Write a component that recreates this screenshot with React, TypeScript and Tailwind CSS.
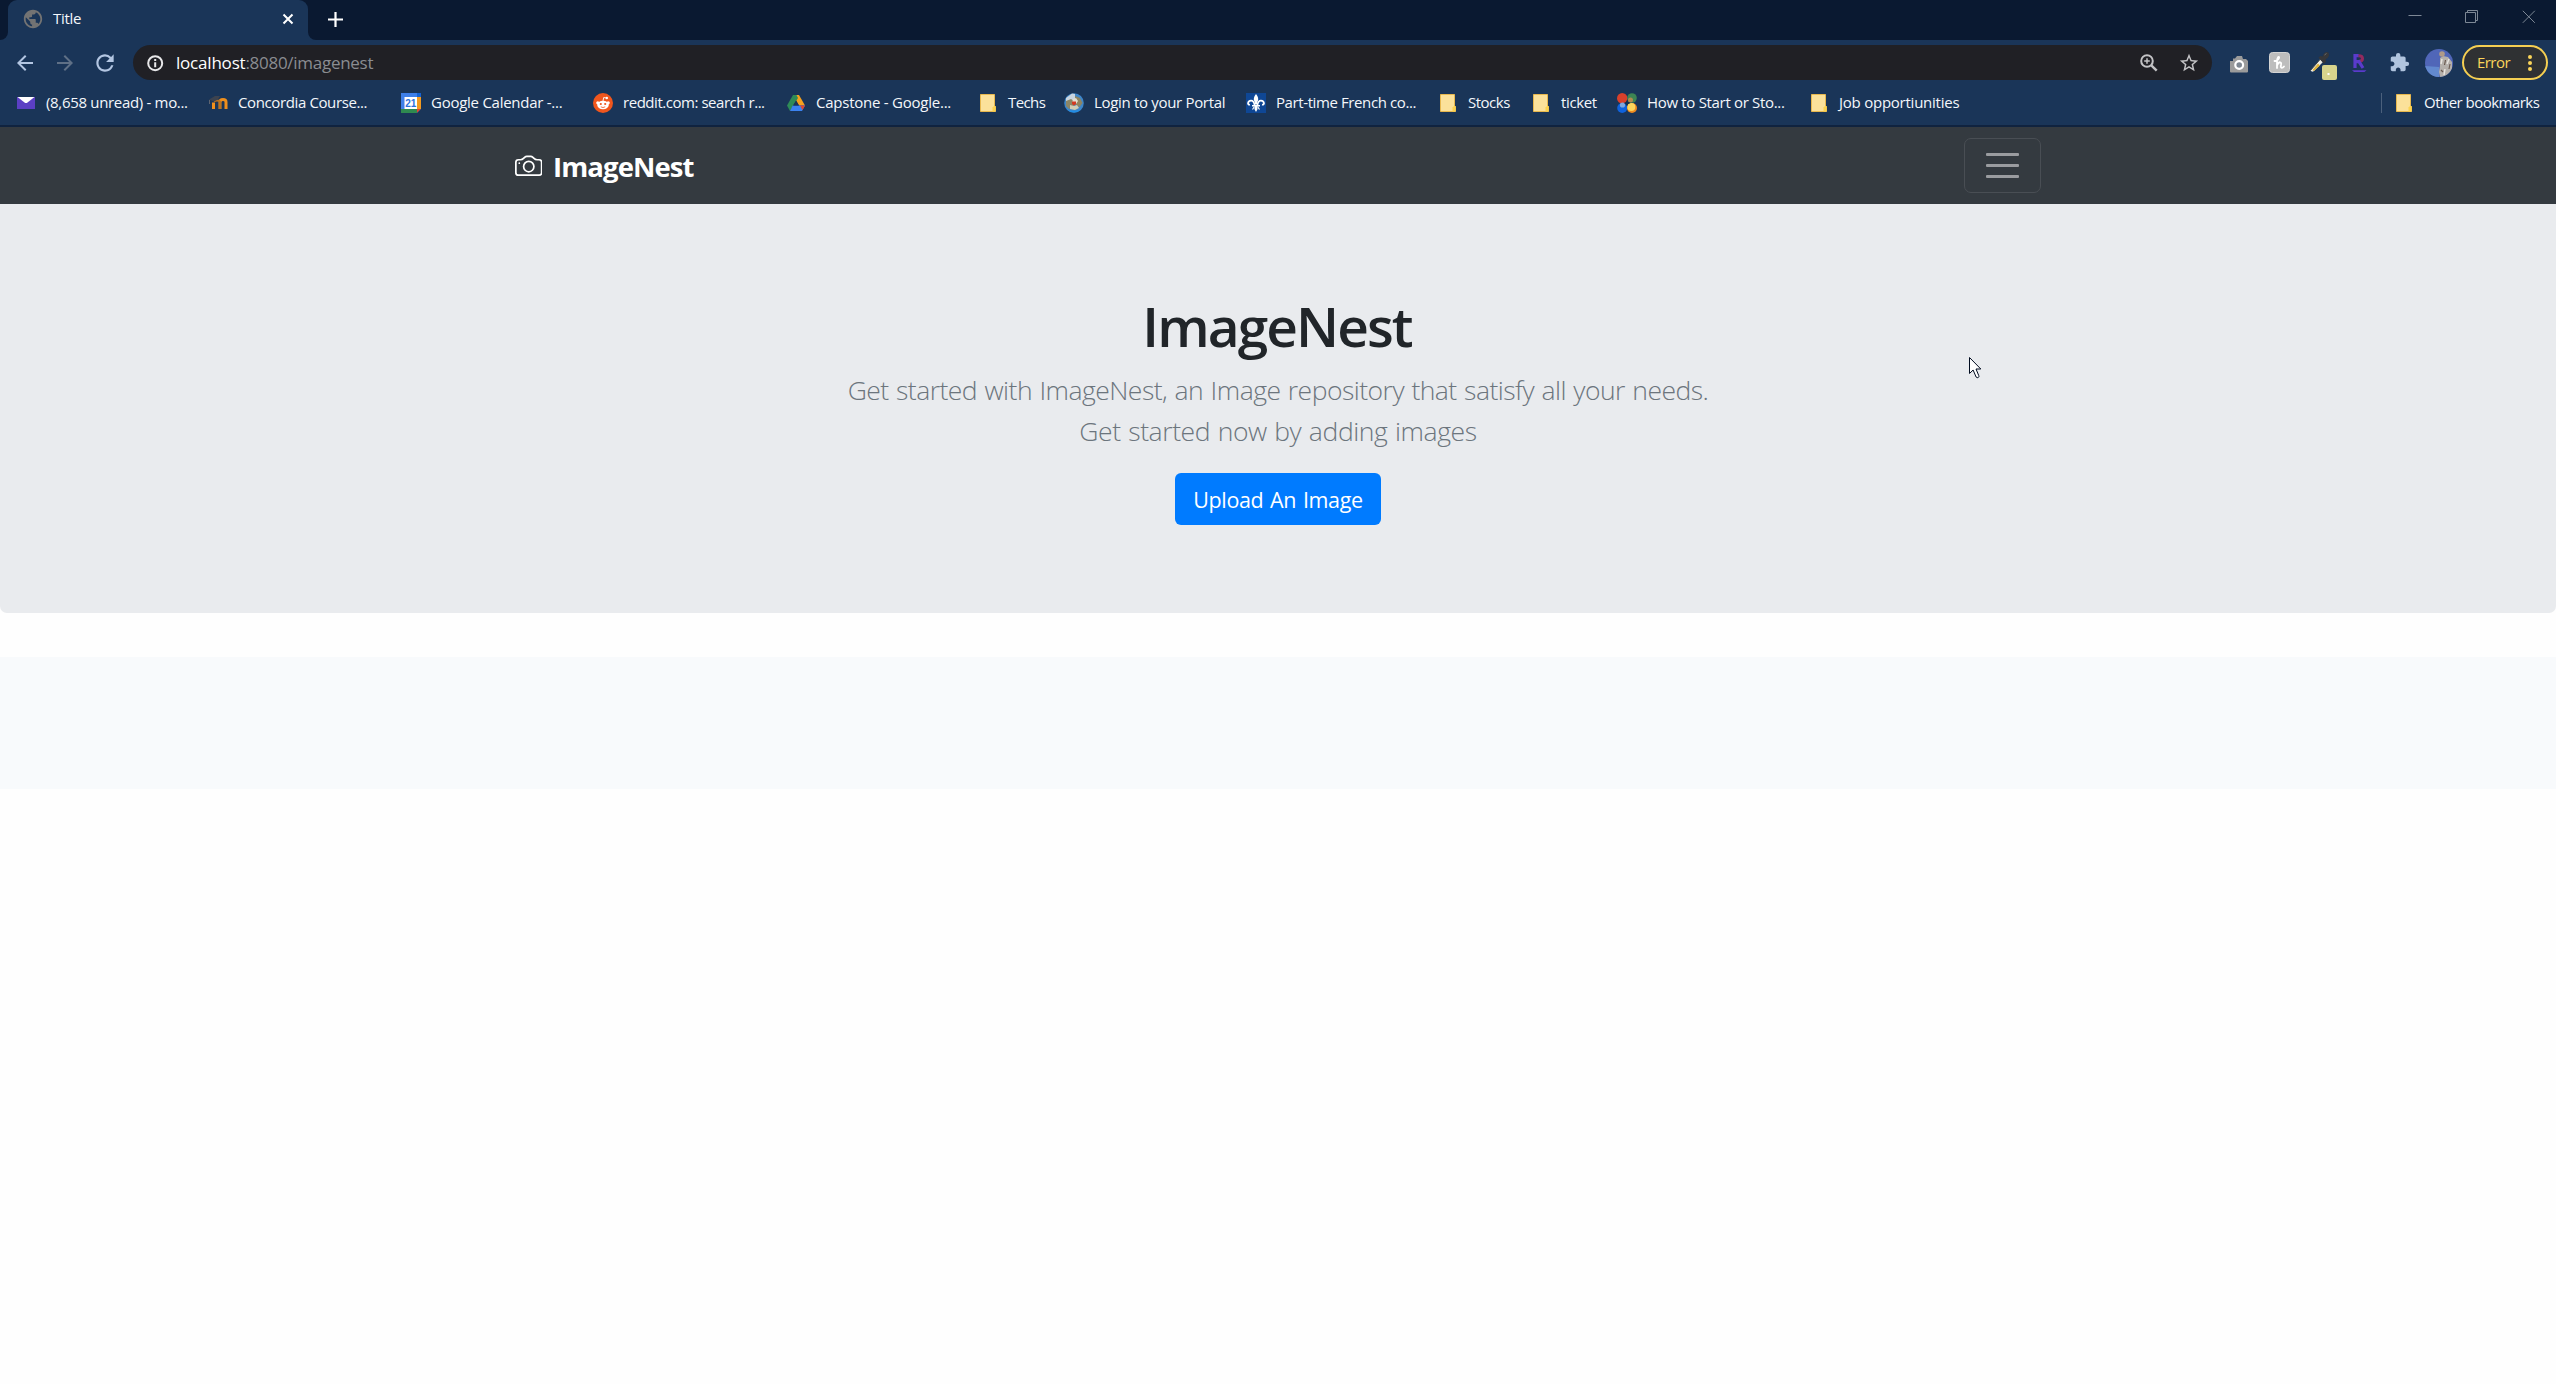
import type { ReactNode } from 'react';
import { MdArrowBack, MdArrowForward, MdExtension, MdPublic, MdRefresh, MdStarBorder } from 'react-icons/md';
import { BsCamera } from 'react-icons/bs';

/* ---------- favicons ---------- */

const FolderIcon = () => (
  <svg width="20" height="20" viewBox="0 0 20 20">
    <path d="M2.5 1.5h14v11.500l1 .5v5h-15z" fill="#fbe19a" stroke="#e8b84e" />
    <path d="M14.5 18.500v-4l2-2 1 1v5z" fill="#fbd34f" />
  </svg>
);

const MailIcon = () => (
  <svg width="20" height="20" viewBox="0 0 20 20">
    <path d="M1 4h18v12H1z" fill="#5b3fc4" />
    <path d="M1.500 4h17L11.500 9.500q-1.500 1-3 0z" fill="#fff" />
  </svg>
);

const MoodleIcon = () => (
  <svg width="20" height="20" viewBox="0 0 20 20" fill="none">
    <path d="M5.500 16V9.500M12 16V9q0-2.500 3-2.500t3 2.500v7" stroke="#ef8f1d" strokeWidth="3" />
    <path d="M6 8.500q3-2 6 0V16" stroke="#b8701f" strokeWidth="1.800" />
    <path d="M1 6.500L7 3h5l-2 3.500-4 2z" fill="#3c4350" />
    <path d="M1.500 7v4" stroke="#5e6470" />
  </svg>
);

const CalendarIcon = () => (
  <svg width="20" height="20" viewBox="0 0 20 20">
    <path d="M0 0h20v20H0z" fill="#3e7fe8" />
    <path d="M16 4h4v12h-4z" fill="#f29a1f" />
    <path d="M16 0h4v4h-4z" fill="#1763d1" />
    <path d="M0 16h16v4H0z" fill="#2f8a50" />
    <path d="M16 16h4l-4 4z" fill="#e2412f" />
    <path d="M20 16v4h-4z" fill="#1a3558" />
    <path d="M3.500 4H16v12H3.500z" fill="#fff" />
    <text x="9.800" y="13.800" textAnchor="middle" fontSize="10" fontWeight="600" fill="#2b72dc" fontFamily="Liberation Sans, sans-serif">
      21
    </text>
  </svg>
);

const RedditIcon = () => (
  <svg width="20" height="20" viewBox="0 0 20 20">
    <circle cx="10" cy="10" r="10" fill="#f0561d" />
    <circle cx="4.800" cy="9.800" r="1.600" fill="#fff" />
    <circle cx="15.200" cy="9.800" r="1.600" fill="#fff" />
    <ellipse cx="10" cy="12" rx="5.800" ry="4.200" fill="#fff" />
    <path d="M10 8l.700-3.500 3 .600" stroke="#fff" strokeWidth=".9" fill="none" />
    <circle cx="13.800" cy="5" r="1.200" fill="#fff" />
    <circle cx="7.800" cy="11" r="1.100" fill="#f0561d" />
    <circle cx="12.200" cy="11" r="1.100" fill="#f0561d" />
    <path d="M7.800 13.800q2.200 1.500 4.400 0" stroke="#f0561d" strokeWidth=".8" fill="none" />
  </svg>
);

const DriveIcon = () => (
  <svg width="20" height="20" viewBox="0 0 20 20">
    <path d="M7 2h6l6 10.500h-6z" fill="#f7a11d" />
    <path d="M7 2h3.500l1.500 3-8 13-3-5.500z" fill="#2e8b57" />
    <path d="M6.700 12.500H19L16 18H4z" fill="#3b82f0" />
    <path d="M14 12.500h5l-2.500 4.500z" fill="#e0452f" />
    <path d="M10 7.500l3 5H7z" fill="#1a3558" />
  </svg>
);

const PortalIcon = () => (
  <svg width="20" height="20" viewBox="0 0 20 20">
    <circle cx="10" cy="10" r="9.800" fill="#3e86c9" />
    <path d="M2 5L8 .500l3 .500v6l-4 2-5 1z" fill="#c9d5e0" />
    <path d="M2 8l5-2 3 2v6l-5 2-3-3z" fill="#8b8566" />
    <path d="M11 3l5 2 2.500 5-3 4-4-2z" fill="#8f8460" />
    <path d="M9 6l3-1 2 3-2 3-4-1z" fill="#e3dfd2" />
    <path d="M8 8.500h4v2.500l-2 1.500-2-1.500z" fill="#d33a22" />
    <path d="M6 12l4 1 3-1 2 3-4 2-5-1z" fill="#d0cdb5" />
    <path d="M3 16.500q7 2.500 14 0-7 6-14 0z" fill="#1f8de6" />
  </svg>
);

const QuebecIcon = () => (
  <svg width="20" height="20" viewBox="0 0 20 20">
    <path d="M0 0h20v20H0z" fill="#0f4795" />
    <path d="M10 1q3.400 4 1.600 7.500-.600 1.500-.600 3H9q0-1.500-.600-3Q6.600 5 10 1z" fill="#fff" />
    <path
      d="M8.600 12.500Q8 7.500 5 7.600 2.300 7.800 2 10.300q.200 1.700 2 1.300M11.400 12.500q.600-5 3.600-4.900 2.700.200 3 2.700-.200 1.700-2 1.300"
      fill="none"
      stroke="#fff"
      strokeWidth="1.700"
    />
    <path d="M6 12h8v1.500H6zM9 13h2l.6 3L10 19l-1.600-3z" fill="#fff" />
    <path d="M8.500 13.500L6.500 16.500M11.500 13.500l2 3" stroke="#fff" strokeWidth="1.200" />
  </svg>
);

const ClusterIcon = () => (
  <svg width="20" height="20" viewBox="0 0 20 20">
    <circle cx="5.200" cy="5.200" r="5.200" fill="#d8402b" />
    <circle cx="15" cy="5" r="4.800" fill="#3d8453" />
    <circle cx="13.500" cy="7" r="2.500" fill="#b08a50" />
    <circle cx="5.200" cy="15" r="5" fill="#0f62dd" />
    <circle cx="5.500" cy="12" r="2.600" fill="#7fa6dc" />
    <circle cx="15" cy="15" r="5" fill="#f08a1f" />
    <circle cx="14.300" cy="14" r="4" fill="#fbd65c" />
    <path d="M10 7l1.200 2.200L13.500 10l-2.300 1L10 13l-1-2-2-1 2-.800z" fill="#14304f" />
  </svg>
);

/* ---------- bookmarks ---------- */

type Bookmark = { label: string; icon: ReactNode; width: string; tracking: string };

const bookmarks: Bookmark[] = [
  { label: '(8,658 unread) - mo...', icon: <MailIcon />, width: 'w-[192px]', tracking: 'tracking-[-0.32px]' },
  { label: 'Concordia Course...', icon: <MoodleIcon />, width: 'w-[193px]', tracking: 'tracking-[-0.38px]' },
  { label: 'Google Calendar -...', icon: <CalendarIcon />, width: 'w-[192px]', tracking: 'tracking-[-0.26px]' },
  { label: 'reddit.com: search r...', icon: <RedditIcon />, width: 'w-[193px]', tracking: 'tracking-[-0.46px]' },
  { label: 'Capstone - Google...', icon: <DriveIcon />, width: 'w-[192px]', tracking: 'tracking-[-0.24px]' },
  { label: 'Techs', icon: <FolderIcon />, width: 'w-[86px]', tracking: 'tracking-[-0.6px]' },
  { label: 'Login to your Portal', icon: <PortalIcon />, width: 'w-[182px]', tracking: 'tracking-[-0.32px]' },
  { label: 'Part-time French co...', icon: <QuebecIcon />, width: 'w-[192px]', tracking: 'tracking-[-0.4px]' },
  { label: 'Stocks', icon: <FolderIcon />, width: 'w-[93px]', tracking: 'tracking-[-0.5px]' },
  { label: 'ticket', icon: <FolderIcon />, width: 'w-[86px]', tracking: 'tracking-[-0.35px]' },
  { label: 'How to Start or Sto...', icon: <ClusterIcon />, width: 'w-[192px]', tracking: 'tracking-[-0.32px]' },
  { label: 'Job opportiunities', icon: <FolderIcon />, width: 'w-[180px]', tracking: 'tracking-[-0.24px]' },
];

const BookmarkItem = ({ label, icon, width, tracking }: Bookmark) => (
  <div className={`flex shrink-0 items-center gap-2.5 ${width}`}>
    {icon}
    <span className={`whitespace-nowrap pb-0.5 text-[15px] leading-5 text-[#f4f7fb] ${tracking}`}>{label}</span>
  </div>
);

/* ---------- toolbar ---------- */

const Cell = ({ children, className = '' }: { children: ReactNode; className?: string }) => (
  <div className={`flex h-9 w-10 shrink-0 items-center justify-center ${className}`}>{children}</div>
);

const SiteInfoIcon = () => (
  <svg width="20" height="20" viewBox="0 0 20 20" className="text-[#e8e8ea]">
    <circle cx="10.200" cy="10.200" r="7" fill="none" stroke="currentColor" strokeWidth="2" />
    <path d="M9.200 9.200h2v5h-2zM9.200 6h2v2h-2z" fill="currentColor" />
  </svg>
);

const ZoomIcon = () => (
  <svg width="18" height="18" viewBox="0 0 18 18" fill="none" stroke="#c3c3c6">
    <circle cx="7" cy="7" r="5.800" strokeWidth="2" />
    <path d="M11.300 11.300l5.400 5.400" strokeWidth="2.400" />
    <path d="M7 4.200v5.600M4.200 7h5.600" strokeWidth="1.500" />
  </svg>
);

const CameraExtension = () => (
  <svg width="20" height="20" viewBox="0 0 20 20" className="mt-0.5">
    <path d="M1 7h3V4.500h2L8 2h5l1 3h3l2 2v10.500q0 1-1 1H2q-1 0-1-1z" fill="#9b9b9b" />
    <circle cx="10.200" cy="11" r="3.900" fill="#7e8792" stroke="#fff" strokeWidth="2.200" />
  </svg>
);

const HoneyExtension = () => (
  <svg width="21" height="21" viewBox="0 0 21 21">
    <rect x=".5" y=".5" width="20" height="20" rx="3" fill="#bdbdbd" stroke="#d4d4d4" />
    <path
      d="M5.500 9q3 0 4.500-3 .500-1.500-.800-1-1.200 1.500-1.200 5v6M8 13.500q1.500-3.500 3.200-3.200 1.300.200.800 2.700-.600 2.500.800 2.800 1.200 0 2.200-1.300"
      fill="none"
      stroke="#fff"
      strokeWidth="1.800"
      strokeLinecap="round"
    />
  </svg>
);

const DropperExtension = () => (
  <svg width="28" height="30" viewBox="0 0 28 30">
    <path d="M1.500 20.500L11 9.500l3 2.500L5 21q-2 1.500-3.500-.500z" fill="#efece2" />
    <path d="M3.500 20l5.500-6.500 2 2L5 21z" fill="#e0b43c" />
    <path d="M1.500 20.500l9.500-11" stroke="#3b3f45" strokeWidth=".9" />
    <path d="M9.500 7.500l2-1.500 2 .500L15 3.500q2-2.500 4.500-1 1.500 2.500-.500 5l-2.500 2 .500 2-2 2.500z" fill="#36373a" />
    <path d="M15.500 5l2-1.500" stroke="#6a6c70" />
    <rect x="13" y="15" width="15" height="15" rx="2" fill="#d8d48c" />
    <rect x="18.500" y="23" width="2" height="2" fill="#fff" />
  </svg>
);

const RakutenExtension = () => (
  <svg width="15" height="20" viewBox="0 0 15 20">
    <path d="M3 15V2.700h3.800" fill="none" stroke="#5a3bcb" strokeWidth="3.200" />
    <path d="M6.500 2.700q4 0 4 2.800t-3.500 2.800" fill="none" stroke="#932a5e" strokeWidth="3" />
    <path d="M3 8.600h4l4 6.400" fill="none" stroke="#5a3bcb" strokeWidth="3.200" />
    <path d="M0 17.200h14.500l-2 1.800H2z" fill="#5a3bcb" />
  </svg>
);

const Avatar = () => (
  <svg width="28" height="28" viewBox="0 0 28 28">
    <defs>
      <clipPath id="avatar-circle">
        <circle cx="14" cy="14" r="14" />
      </clipPath>
    </defs>
    <g clipPath="url(#avatar-circle)">
      <path d="M0 0h28v28H0z" fill="#5066b8" />
      <path d="M0 17l14 1v10H0z" fill="#6289cf" />
      <path d="M15 9l3-2 5 1 4 5v15H15l-1-5 1-6z" fill="#b5b0ab" />
      <circle cx="17" cy="5" r="2.800" fill="#b09a88" />
      <path d="M17 10l-1 5M24 10l-2 5M20 20l-1 6" stroke="#e8e4df" strokeWidth="1.500" />
      <path d="M20.500 11l-1 5M25 15l-1 5M16 21l2 2" stroke="#6b5a50" strokeWidth="1.200" />
    </g>
  </svg>
);

const WindowButtons = () => (
  <div className="flex items-start gap-[43px] pr-5 pt-[10px] text-[#7d8896]">
    <svg width="14" height="14" viewBox="0 0 14 14" stroke="currentColor" fill="none">
      <path d="M.5 5.500h13" />
    </svg>
    <svg width="14" height="14" viewBox="0 0 14 14" stroke="currentColor" fill="none">
      <path d="M.5 2.500h10v10H.5zM2.500 2.500v-2h10v10h-2" />
    </svg>
    <svg width="14" height="14" viewBox="0 0 14 14" stroke="currentColor" fill="none">
      <path d="M.8.8l12 12M12.800.8l-12 12" />
    </svg>
  </div>
);

const BrowserChrome = () => (
  <header className="flex h-[127px] flex-col border-b-2 border-[#10233f] bg-[#1a3558]">
    <div className="flex h-10 justify-between bg-[#0a1931]">
      <div className="flex">
        <div className="w-2 bg-[#1a3558]">
          <div className="h-full rounded-br-[8px] bg-[#0a1931]" />
        </div>
        <div className="bg-[#0a1931]">
          <div className="flex h-10 w-[300px] items-center rounded-t-[9px] bg-[#1a3558] pb-[3px] pl-[14px] pr-[14px]">
            <MdPublic size={22} className="text-[#737373]" />
            <span className="ml-[9px] pb-px text-[15px] leading-5 tracking-[-0.3px] text-[#f4f7fb]">Title</span>
            <svg width="12" height="12" viewBox="0 0 12 12" className="ml-auto">
              <path d="M1.500 1.500l9 9M10.500 1.500l-9 9" stroke="#fff" strokeWidth="2" />
            </svg>
          </div>
        </div>
        <div className="w-2 bg-[#1a3558]">
          <div className="h-full rounded-bl-[8px] bg-[#0a1931]" />
        </div>
        <svg width="15" height="15" viewBox="0 0 15 15" className="ml-3 mt-[12px]">
          <path d="M7.500 0v15M0 7.500h15" stroke="#fff" strokeWidth="2.200" />
        </svg>
      </div>
      <WindowButtons />
    </div>

    <div className="flex h-[45px] items-center pl-[5px] pr-2">
      <Cell>
        <MdArrowBack size={24} className="text-[#b3c6e2]" />
      </Cell>
      <Cell>
        <MdArrowForward size={24} className="text-[#5f7086]" />
      </Cell>
      <Cell>
        <MdRefresh size={26} className="text-[#b3c6e2]" />
      </Cell>
      <div className="ml-[8px] flex h-[35px] flex-1 items-center rounded-full bg-[#202025] pl-3 pr-[3px]">
        <SiteInfoIcon />
        <span className="ml-[11px] text-[17px] leading-6 tracking-[-0.2px] text-white">localhost</span>
        <span className="text-[17px] leading-6 tracking-[-0.28px] text-[#8a8c91]">:8080/imagenest</span>
        <Cell className="ml-auto">
          <ZoomIcon />
        </Cell>
        <Cell>
          <MdStarBorder size={22} className="text-[#c3c3c6]" />
        </Cell>
      </div>
      <div className="ml-[7px] flex items-center">
        <Cell>
          <CameraExtension />
        </Cell>
        <Cell>
          <HoneyExtension />
        </Cell>
        <Cell className="pl-2 pt-1">
          <DropperExtension />
        </Cell>
        <Cell>
          <RakutenExtension />
        </Cell>
        <Cell>
          <MdExtension size={21} className="text-[#b0c4de]" />
        </Cell>
        <Cell>
          <Avatar />
        </Cell>
      </div>
      <div className="ml-[3px] flex h-[35px] w-[86px] items-center justify-between rounded-full border-2 border-[#f5cf52] bg-[#2f3133] pl-[13px] pr-[14px]">
        <span className="pb-px text-[15px] leading-5 tracking-[-0.55px] text-[#fbd55a]">Error</span>
        <svg width="4" height="16" viewBox="0 0 4 16" fill="#fbd55a">
          <circle cx="2" cy="2" r="2" />
          <circle cx="2" cy="8" r="2" />
          <circle cx="2" cy="14" r="2" />
        </svg>
      </div>
    </div>

    <div className="flex h-10 items-center pb-1 pl-4">
      {bookmarks.map((b) => (
        <BookmarkItem key={b.label} {...b} />
      ))}
      <div className="ml-auto flex items-center">
        <div className="mr-3 h-5 w-px bg-[#4b607c]" />
        <BookmarkItem label="Other bookmarks" icon={<FolderIcon />} width="w-[162px]" tracking="tracking-[-0.52px]" />
      </div>
    </div>
  </header>
);

/* ---------- page ---------- */

const Navbar = () => (
  <nav className="flex h-[77px] justify-center bg-[#343a40]">
    <div className="flex w-[1527px] items-center justify-between pr-px">
      <a className="flex items-center gap-[11px] text-white">
        <BsCamera size={27.5} />
        <strong className="pt-0.5 text-[27.5px] font-bold leading-10 tracking-[-0.9px]">ImageNest</strong>
      </a>
      <button className="flex h-[55px] w-[77px] flex-col items-center justify-center gap-2 rounded-[7px] border border-[#494e54]">
        <span className="h-[3px] w-[33px] rounded-[1px] bg-[#9a9ca0]" />
        <span className="h-[3px] w-[33px] rounded-[1px] bg-[#9a9ca0]" />
        <span className="h-[3px] w-[33px] rounded-[1px] bg-[#9a9ca0]" />
      </button>
    </div>
  </nav>
);

const Hero = () => (
  <section className="flex h-[409px] flex-col items-center rounded-b-[7px] bg-[#e9ebee] pt-[89px] text-center">
    <h1 className="pr-0.5 text-[55px] font-semibold leading-[66px] tracking-[-1.92px] text-[#212529]">ImageNest</h1>
    <p className="mt-[11px] text-[26.5px] font-light leading-[41px] text-[#6c757d] [word-spacing:1px]">
      <span className="tracking-[-0.52px]">
        Get started with ImageNest, an Image repository that satisfy all your needs.
      </span>
      <br />
      <span className="tracking-[-0.4px]">Get started now by adding images</span>
    </p>
    <button className="mt-[21px] h-[52px] w-[206px] rounded-[6px] bg-[#007bff] text-[21.5px] leading-[33px] tracking-[-0.36px] text-white [word-spacing:1.5px]">
      Upload An Image
    </button>
  </section>
);

const Pointer = () => (
  <svg width="13" height="22" viewBox="0 0 13 22" className="absolute left-[1969px] top-[357px]">
    <path
      d="M.5.5v16l3.600-3.500 3 7q1 1.300 2.400.300.700-.600.300-1.600L7 12h4.800z"
      fill="#fff"
      stroke="#000b1f"
    />
  </svg>
);

export default function App() {
  return (
    <div className="relative min-h-[1384px] bg-[#fefefe] font-['Open_Sans','Noto_Sans',sans-serif]">
      <BrowserChrome />
      <Navbar />
      <Hero />
      <section className="mt-11 h-[132px] bg-[#f8fafc]" />
      <Pointer />
    </div>
  );
}
